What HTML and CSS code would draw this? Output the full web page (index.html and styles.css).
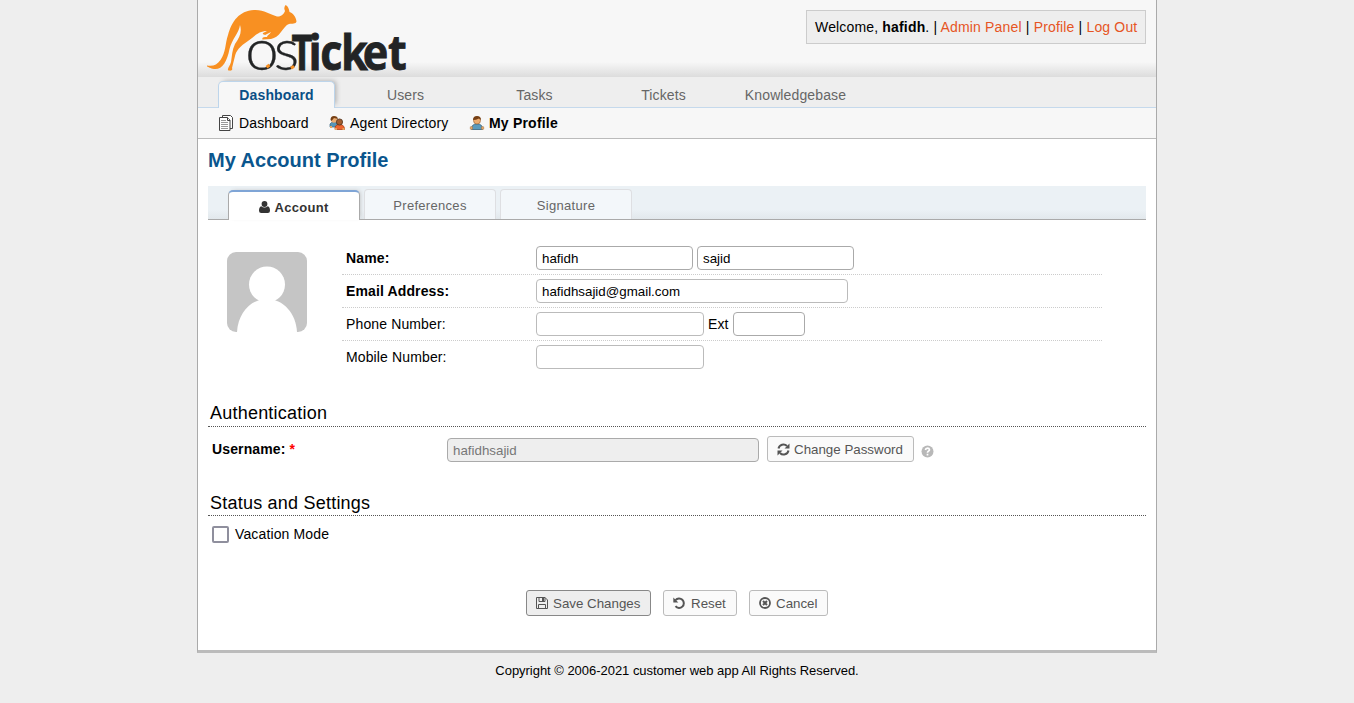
FILE: index.html
```html
<!DOCTYPE html>
<html lang="en">
<head>
<meta charset="utf-8">
<title>My Account Profile</title>
<link rel="stylesheet" href="styles.css">
</head>
<body>
<div class="page">
  <header class="header">
    <svg class="logo" width="202" height="72" viewBox="206 3 202 72">
      <path fill="#f89022" d="M207 65.500C213 66.500 217 65 220.500 60C226 52 225 44 228 35C232 21 239 11 254 10C264 9.500 269 14 277 16.500C281 17 284 14 285 11C284 9 284 7 285.500 5C288 6 289 9 289.500 12C293 13 296 17 296.500 21.500C296 24 292 23.500 289 24C286 25 284 28 281 32C278 36 275 38 271 39L262.500 39.500C261.500 37.500 264 37 267 37C267 35.500 270 34 271 32L265 35C265 34 262 35 263 33L267 31C258 31 254 37 248 41C240 46 236 51 235 56L232 68C233 70 231 71 229 70.500C226 70 230 66 231 62C232 56 232 50 235 44C240 37 242 32 240 25C239 33 232 39 229.500 49C227 62 222 70 214 69C210 68.500 209 67 207 66.500Z"/>
      <g transform="scale(1.05 1)"><text class="logo-os" x="233.600 260.800" y="70">os</text></g>
      <text class="logo-ticket"><tspan x="291.500" y="70" textLength="21" lengthAdjust="spacingAndGlyphs">T</tspan></text>
      <g transform="scale(.9 1)"><text class="logo-ticket" x="342.800 355.800 379 403 431" y="70">icket</text></g>
      <path stroke="#f89022" stroke-width="3" d="M266.500 67.300l3-2.300M291 68.300l3-2"/>
    </svg>
    <p class="welcome">Welcome, <b>hafidh</b>. | <a>Admin Panel</a> | <a>Profile</a> | <a>Log Out</a></p>
  </header>
  <nav class="nav">
    <a class="nav-tab active">Dashboard</a><a class="nav-tab">Users</a><a class="nav-tab">Tasks</a><a class="nav-tab">Tickets</a><a class="nav-tab wide">Knowledgebase</a>
  </nav>
  <nav class="subnav">
    <a class="sub sub-dash"><svg width="16" height="16" viewBox="0 0 16 16"><g fill="#fff" stroke="#444"><path d="M3.500.5h8l2 2v11h-10z"/><path d="M.5 2.500h8l2.500 2.500v10.500H.5z"/><path stroke="#999" d="M2 5.500h5M2 7.500h7M2 9.500h7M2 11.500h7M2 13.500h7"/><path d="M8.500 2.500v3H11"/></g></svg>Dashboard</a>
    <a class="sub sub-agent"><svg width="16" height="16" viewBox="0 0 16 16"><path fill="#5796b8" stroke="#35627e" stroke-width=".7" d="M1 12V9q1-2 4-2 4 0 4 5z"/><circle cx="5" cy="4.800" r="3" fill="#edac70"/><path fill="#764015" d="M1.500 5Q1.500 1 5 1t4 3L5 3 2.500 6z"/><path fill="#ee642d" stroke="#ad3d12" stroke-width=".8" d="M6 14.500Q5.500 9.500 10.500 9.500t5 5z"/><circle cx="10.500" cy="7" r="3.100" fill="#a15c2e" stroke="#50321c" stroke-width=".8"/><path fill="#e5a45d" d="M1 11h2v2H1zM6 13h2v2H6zM13.500 13h2v2h-2z"/></svg>Agent Directory</a>
    <a class="sub sub-profile"><svg width="16" height="16" viewBox="0 0 16 16"><path fill="#5b9abc" stroke="#35627e" stroke-width=".8" d="M2.500 14.500Q2 9 8 9t5.500 5.500z"/><circle cx="8" cy="5.500" r="3.500" fill="#edac70" stroke="#a66a37" stroke-width=".7"/><path fill="#764015" d="M4 5Q4 1 8 1t4 4L10 3.500Q7 5 4 5z"/><path fill="#edb16f" stroke="#a66a37" stroke-width=".5" d="M1.300 11.800h2.200v2.400H1.300zM12.500 11.800h2.200v2.400h-2.200z"/></svg>My Profile</a>
  </nav>
  <main class="content">
    <h1 class="title">My Account Profile</h1>
    <div class="tabs">
      <a class="tab current"><svg width="11" height="12" viewBox="0 0 11 12"><ellipse cx="5.500" cy="3" rx="2.900" ry="3"/><path d="M2.200 5.200Q5.500 8 8.800 5.200 11 6 11 9.700 11 12 8.800 12H2.200Q0 12 0 9.700 0 6 2.200 5.200z"/></svg>Account</a><a class="tab">Preferences</a><a class="tab">Signature</a>
    </div>
    <section class="account">
      <svg class="avatar" width="80" height="80" viewBox="0 0 80 80"><rect width="80" height="80" rx="9" fill="#c5c5c5"/><circle cx="40" cy="32.500" r="18" fill="#fff"/><path fill="#fff" d="M10 80C11 61 24 47 40 47s29 14 30 33z"/></svg>
      <div class="fields">
        <div class="row strong"><label>Name:</label><input class="w157" value="hafidh"><input class="w157" value="sajid"></div>
        <div class="row strong"><label>Email Address:</label><input class="w312 light" value="hafidhsajid@gmail.com"></div>
        <div class="row"><label>Phone Number:</label><input class="w168 light"><span class="ext">Ext</span><input class="w72"></div>
        <div class="row"><label>Mobile Number:</label><input class="w168 light"></div>
      </div>
    </section>
    <h2 class="section auth">Authentication</h2>
    <div class="user-row">
      <label>Username: <span class="required">*</span></label>
      <input class="w312" value="hafidhsajid" disabled>
      <button class="button change"><svg width="13" height="13" viewBox="0 0 13 13"><path fill="none" stroke="#555" stroke-width="2" d="M1.500 5.500A5 5 0 0 1 10 3M11.500 7.500A5 5 0 0 1 3 10"/><path fill="#555" d="M12.500.5v5h-5zM.5 12.500v-5h5z"/></svg>Change Password</button>
      <svg class="help" width="13" height="13" viewBox="0 0 13 13"><circle cx="6.500" cy="6.500" r="6" fill="#b8b8b8"/><path fill="none" stroke="#fff" stroke-width="1.700" d="M4.400 5Q4.700 3.200 6.500 3.200T8.500 4.800Q8.500 5.700 7.300 6.300 6.500 6.700 6.500 7.800M6.500 8.800v1.700"/></svg>
    </div>
    <h2 class="section status">Status and Settings</h2>
    <label class="vacation"><span class="box"></span>Vacation Mode</label>
    <div class="actions">
      <button class="button save"><svg width="12" height="12" viewBox="0 0 12 12"><path fill="none" stroke="#555" d="M.5.500h8.500l2.500 2.500v8.500H.5zM2.500 11.500v-4h7v4M3 .5v4h6v-4"/><path fill="#555" d="M6 1h2v3H6z"/></svg>Save Changes</button>
      <button class="button reset"><svg width="12" height="12" viewBox="0 0 12 12"><path fill="none" stroke="#555" stroke-width="2" d="M2.500 3.200A4.700 4.700 0 1 1 2.500 9.200"/><path fill="#555" d="M.3.500v5h5z"/></svg>Reset</button>
      <button class="button cancel"><svg width="12" height="12" viewBox="0 0 12 12"><circle cx="6" cy="6" r="5" fill="none" stroke="#555" stroke-width="1.800"/><path stroke="#555" stroke-width="2" d="M4 4l4 4M8 4L4 8"/></svg>Cancel</button>
    </div>
  </main>
</div>
<footer class="footer">Copyright © 2006-2021 customer web app All Rights Reserved.</footer>
</body>
</html>
```
FILE: styles.css
```css
* { box-sizing: border-box; }
body { margin: 0; background: #eee; color: #000; font: 14px/20px "Liberation Sans", Arial, sans-serif; letter-spacing: .13px; }
.page { width: 960px; height: 653px; margin: 0 auto; background: #fff; border: solid #aaa; border-width: 0 1px 3px; border-bottom-color: #bbb; }
.header { height: 76px; padding: 3px 10px 0 8px; display: flex; justify-content: space-between; background: linear-gradient(#f7f7f7 62px, #dedede 76px); }
.logo { display: block; letter-spacing: 0; }
.logo-os { font: 300 57px Lato, sans-serif; fill: #222425; stroke: #222425; stroke-width: .3; }
.logo-ticket { font: 700 48px "Open Sans", sans-serif; fill: #222425; stroke: #222425; stroke-width: .8; }
.welcome { height: 34px; width: 340px; margin: 7px 0 0; padding: 6px 0 0 8px; background: #eee; border: 1px solid #ccc; white-space: nowrap; letter-spacing: .165px; }
.welcome a { color: #e65524; }
.nav { height: 32px; display: flex; align-items: flex-end; padding-left: 20px; background: #eee; border-top: 1px solid #ddd; border-bottom: 1px solid #c5d9ec; }
.nav-tab { width: 117px; height: 26px; margin-right: 12px; padding-top: 4px; text-align: center; color: #666; }
.wide { padding-left: 6px; white-space: nowrap; }
.nav-tab.active { height: 27px; margin-bottom: -1px; padding-top: 3px; background: #f7f7f7; border: 1px solid #bdd5eb; border-bottom: 0; border-radius: 5px 5px 0 0; color: #0a4f86; font-weight: bold; box-shadow: 3px -2px 5px -2px #aaa; clip-path: inset(-5px -6px 0 -5px); }
.subnav { height: 31px; display: flex; padding: 5px 0 0 21px; background: #f7f7f7; border-bottom: 1px solid #bbb; }
.sub { display: flex; white-space: nowrap; gap: 4px; }
.sub svg { margin-top: 2px; }
.sub-dash { width: 110px; }
.sub-agent { width: 140px; gap: 5px; }
.sub-profile { font-weight: bold; letter-spacing: .2px; }
.content { padding: 0 10px; }
.title { height: 47px; margin: 0; padding-top: 9px; font-size: 20px; line-height: 24px; letter-spacing: 0; color: #0a568e; }
.tabs { height: 34px; display: flex; align-items: flex-end; gap: 4px; padding-left: 20px; background: linear-gradient(#ebf1f5 24px, #e2e8ec); border-bottom: 1px solid #aaa; font-size: 13px; letter-spacing: .3px; }
.tab { width: 132px; height: 30px; padding-top: 6px; background: #f3f7fa; border: 1px solid #dedfe2; border-bottom: 0; border-radius: 4px 4px 0 0; text-align: center; color: #666; }
.tab.current { height: 30px; padding-top: 6px; margin-bottom: -1px; background: #fff; border: 1px solid #aaa; border-top: 2px solid #7fa5d6; border-bottom: 0; border-radius: 5px 5px 0 0; color: #333; font-weight: bold; box-shadow: 2px -1px 4px -2px #bbb; }
.tab svg { margin-right: 4px; fill: #333; vertical-align: -1px; }
.account { height: 177px; display: flex; padding: 22px 0 0 19px; }
.avatar { margin: 10px 35px 0 0; }
.fields { width: 760px; }
.row { height: 33px; display: flex; align-items: center; padding-left: 4px; border-bottom: 1px dotted #ccc; }
.row:last-child { border: 0; padding-bottom: 1px; }
.row label { width: 190px; }
.strong label { font-weight: bold; }
input { height: 24px; margin: 0; padding: 1px 5px; background: #fff; border: 1px solid #aaa; border-radius: 4px; font: 13.333px "Liberation Sans", Arial, sans-serif; color: #000; }
input.light { border-color: #bbb; }
input:disabled { background: #eee; color: #777; padding-top: 2px; }
.w157 { width: 157px; }
.w157 + .w157 { margin-left: 4px; }
.w312 { width: 312px; }
.w168 { width: 168px; }
.w72 { width: 72px; }
.ext { width: 29px; padding-left: 4px; }
.section { margin: 0; padding: 5px 2px 0; font-size: 18px; line-height: 22px; font-weight: normal; letter-spacing: .22px; border-bottom: 1px dotted #555; }
.auth { height: 30px; }
.user-row { height: 62px; padding: 9px 0 0 4px; display: flex; align-items: flex-start; }
.user-row label { width: 235px; padding-top: 3px; font-weight: bold; }
.user-row input { margin: 2px 8px 0 0; }
.required { color: red; }
.button { height: 26px; margin: 0; padding: 0 0 0 9px; display: flex; align-items: center; background: #fafafa; border: 1px solid #bbb; border-radius: 3px; color: #555; font: 13.333px "Liberation Sans", Arial, sans-serif; white-space: nowrap; }
.button svg { margin-right: 5px; flex-shrink: 0; }
.change { width: 147px; }
.change svg { margin-right: 4px; }
.help { margin: 9px 0 0 7px; }
.status { height: 27px; padding-top: 3px; }
.vacation { height: 74px; display: flex; padding: 8px 0 0 4px; }
.box { width: 17px; height: 17px; margin: 2px 6px 0 0; border: 2px solid #8f8f9d; border-radius: 2px; background: #fff; }
.actions { display: flex; gap: 12px; padding-left: 318px; }
.save { width: 125px; background: #eee; border-color: #888; }
.reset { width: 74px; }
.reset svg { margin-right: 6px; }
.cancel { width: 79px; }
.footer { padding-top: 8px; text-align: center; font-size: 13px; letter-spacing: -.03px; }
```
